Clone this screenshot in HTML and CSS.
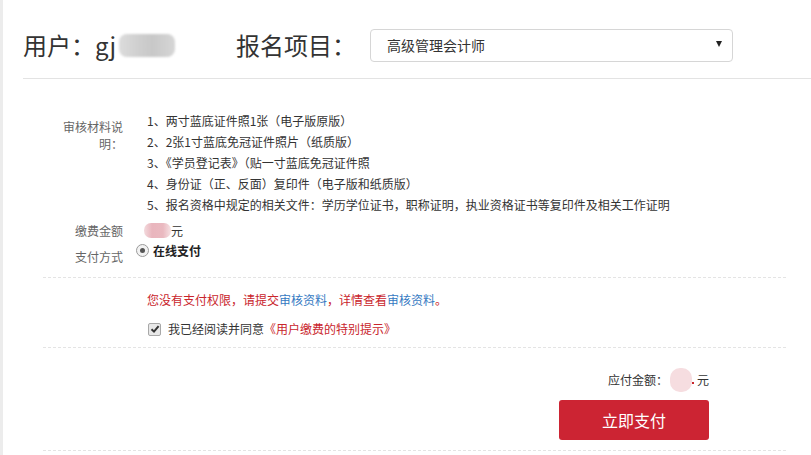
FILE: index.html
```html
<!DOCTYPE html>
<html lang="zh-CN">

<head>
    <meta charset="UTF-8">
    <title>报名缴费</title>
    <link rel="stylesheet" href="styles.css">
</head>

<body>
    <div class="page">
        <div class="head">
            <div class="user">用户：gj<span class="blur-name"></span></div>
            <div class="proj-label">报名项目：</div>
            <div class="proj-select">
                <span>高级管理会计师</span>
                <i class="arrow"></i>
            </div>
        </div>

        <div class="main">
            <div class="row row-doc">
                <div class="label">审核材料说<br>明：</div>
                <ul class="doc-list">
                    <li>1、两寸蓝底证件照1张（电子版原版）</li>
                    <li>2、2张1寸蓝底免冠证件照片（纸质版）</li>
                    <li>3、《学员登记表》（贴一寸蓝底免冠证件照</li>
                    <li>4、身份证（正、反面）复印件（电子版和纸质版）</li>
                    <li>5、报名资格中规定的相关文件：学历学位证书，职称证明，执业资格证书等复印件及相关工作证明</li>
                </ul>
            </div>
            <div class="row row-fee">
                <div class="label">缴费金额</div>
                <div class="val"><span class="blur-fee"></span>元</div>
            </div>
            <div class="row row-pay">
                <div class="label">支付方式</div>
                <div class="val">
                    <span class="radio"><i></i></span>
                    <b>在线支付</b>
                </div>
            </div>

            <div class="notice">
                <p class="warn">您没有支付权限，请提交<a href="#">审核资料</a>，详情查看<a href="#">审核资料</a>。</p>
                <p class="agree">
                    <span class="check">
                        <svg width="10" height="10" viewBox="0 0 10 10"><path d="M1.5 5.2 L4 7.6 L8.6 2.2" fill="none" stroke="#333" stroke-width="2"/></svg>
                    </span>
                    我已经阅读并同意<a href="#">《用户缴费的特别提示》</a>
                </p>
            </div>

            <div class="total">
                <p>应付金额：<span class="blur-total"><i></i></span>元</p>
                <button class="pay-btn">立即支付</button>
            </div>
        </div>
    </div>
</body>

</html>
```

FILE: styles.css
```css
* {
    margin: 0;
    padding: 0;
}

body {
    font-family: "Noto Sans CJK SC", "Liberation Sans", sans-serif;
    color: #333;
    background: #fff;
}

.page {
    border-left: 3px solid #ececec;
    height: 455px;
    box-sizing: border-box;
    overflow: hidden;
}

a {
    text-decoration: none;
}

ul {
    list-style: none;
}

/* 顶部 */
.head {
    display: flex;
    align-items: center;
    height: 79px;
    margin-left: 20px;
    padding-top: 12px;
    box-sizing: border-box;
    border-bottom: 1px solid #e3e3e3;
}

.user {
    width: 213px;
    font-size: 24px;
    line-height: 30px;
    display: flex;
    align-items: center;
}

.blur-name {
    display: inline-block;
    width: 56px;
    height: 23px;
    margin-left: 3px;
    border-radius: 8px;
    background: linear-gradient(90deg, #dcdcdc 0, #cfcfcf 35%, #c8c8c8 60%, #d6d6d6 100%);
    filter: blur(1px);
}

.proj-label {
    font-size: 24px;
    line-height: 30px;
}

.proj-select {
    width: 363px;
    height: 33px;
    margin-left: 14px;
    border: 1px solid #d6d6d6;
    border-radius: 4px;
    box-sizing: border-box;
    padding: 0 10px 0 16px;
    display: flex;
    align-items: center;
    justify-content: space-between;
    font-size: 14px;
}

.arrow {
    width: 0;
    height: 0;
    border-left: 3px solid transparent;
    border-right: 3px solid transparent;
    border-top: 6px solid #222;
    margin-top: -2px;
}

/* 主体 */
.main {
    margin: 0 25px 0 40px;
    font-size: 12px;
}

.row {
    display: flex;
}

.label {
    width: 80px;
    text-align: right;
    color: #666;
    line-height: 17px;
}

.row-doc {
    margin-top: 31px;
}

.row-doc .label {
    padding-top: 8px;
}

.doc-list {
    margin-left: 24px;
}

.doc-list li {
    line-height: 21px;
}

.row-fee {
    margin-top: 4px;
    height: 22px;
    align-items: center;
}

.row-fee .val {
    margin-left: 21px;
    display: flex;
    align-items: center;
}

.blur-fee {
    display: inline-block;
    width: 27px;
    height: 15px;
    border-radius: 7px;
    background: linear-gradient(90deg, #f3dadd 0, #e9b5bd 30%, #eab9c0 70%, #f6e2e4 100%);
    filter: blur(0.6px);
}

.row-pay {
    height: 22px;
}

.row-pay .label {
    padding-top: 7px;
}

.row-pay .val {
    margin-left: 13px;
    display: flex;
    align-items: center;
    height: 18px;
}

.radio {
    width: 11px;
    height: 11px;
    border: 1px solid #9a9a9a;
    border-radius: 50%;
    background: #f2f2f2;
    display: flex;
    align-items: center;
    justify-content: center;
    margin-right: 4px;
}

.radio i {
    width: 5px;
    height: 5px;
    border-radius: 50%;
    background: #555;
}

.row-pay b {
    color: #222;
}

/* 提示 */
.notice {
    margin-top: 14px;
    border-top: 1px dashed #e4e4e4;
    border-bottom: 1px dashed #e4e4e4;
    padding: 14px 0 10px 104px;
}

.warn {
    color: #c9252c;
    line-height: 16px;
}

.warn a {
    color: #3579c2;
}

.agree {
    margin-top: 13px;
    display: flex;
    align-items: center;
    line-height: 16px;
}

.check {
    width: 11px;
    height: 11px;
    border: 1px solid #a8a8a8;
    border-radius: 2px;
    background: #e8e8e8;
    display: flex;
    align-items: center;
    justify-content: center;
    margin: 0 7px 0 1px;
}

.agree a {
    color: #c9252c;
}

/* 合计 */
.total {
    border-bottom: 1px dashed #e4e4e4;
    display: flex;
    flex-direction: column;
    align-items: flex-end;
    padding: 20px 77px 10px 0;
}

.total p {
    display: flex;
    align-items: center;
    line-height: 24px;
}

.blur-total {
    display: inline-block;
    width: 22px;
    height: 24px;
    margin: 0 5px 0 2px;
    border-radius: 10px;
    background: #f6dde0;
    position: relative;
}

.blur-total i {
    position: absolute;
    right: -2px;
    bottom: 8px;
    width: 2px;
    height: 2px;
    background: #c9252c;
}

.pay-btn {
    margin-top: 8px;
    width: 150px;
    height: 40px;
    border: 0;
    border-radius: 3px;
    background: #cc2433;
    color: #fff;
    font-size: 16px;
    font-family: inherit;
}
```
